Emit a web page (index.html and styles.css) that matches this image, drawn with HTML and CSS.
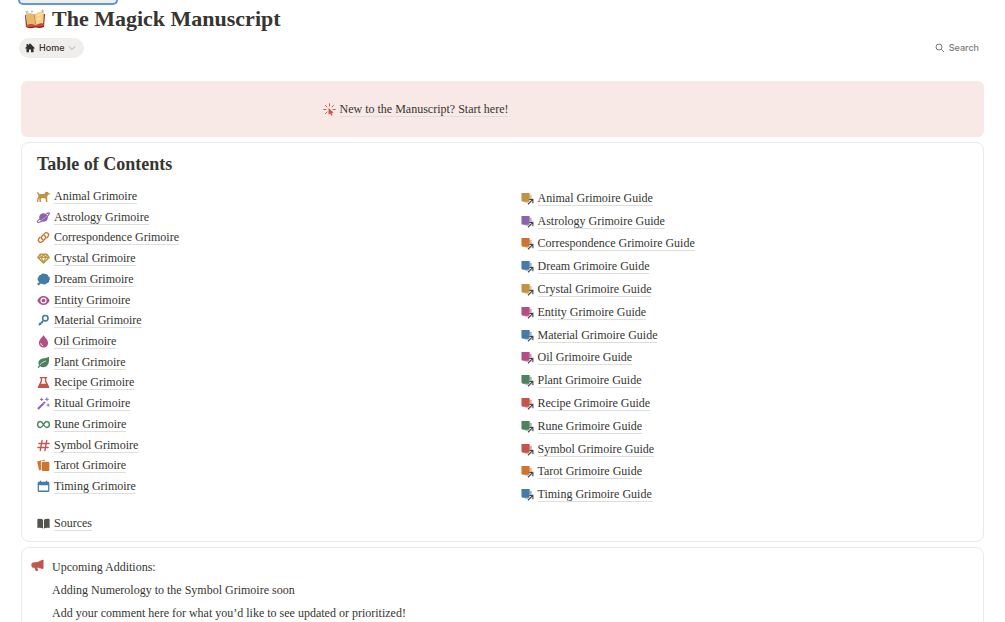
FILE: index.html
```html
<!DOCTYPE html>
<html lang="en">
<head>
<meta charset="utf-8">
<meta name="viewport" content="width=device-width, initial-scale=1">
<title>The Magick Manuscript</title>
<link rel="stylesheet" href="styles.css">
</head>
<body>
<svg class="sprite" aria-hidden="true">
  <symbol id="dog" viewBox="0 0 14 14"><path fill="currentColor" d="M.3 2.400C1 1.900 1.700 2.500 1.800 3.300c.1.800.5 1.100 1.300 1.100h4.700L9.500 1.500l1 .7h1.300l.5 1 1.500.1c0 1.300-.7 1.900-2 1.900l-.9 2.700.3 4.900H9.700L9.200 9.200 5 8.600l-.9 1.500.4 2.700H2.800l-.4-2.700.2-1.400-1 1.600-.3 2.500H-.1l.4-3.400 1.100-2.500V5.500C.4 4.800 0 3.300.3 2.400z"/></symbol>
  <symbol id="planet" viewBox="0 0 14 14"><circle cx="7" cy="7" r="4.700" fill="currentColor"/><path d="M3 8.500C.8 10.300 0 11.500.5 12c.9.800 4.500-.9 7.600-3.400s5.800-5.600 5-6.400c-.4-.5-1.600-.1-3 .6" fill="none" stroke="currentColor" stroke-width="1.300"/><path d="M3 10.700c3.200-1.400 6.200-3.500 8.200-6" fill="none" stroke="#fff" stroke-width=".4"/></symbol>
  <symbol id="link" viewBox="0 0 14 14"><g fill="none" stroke="currentColor" stroke-width="1.500" stroke-linecap="round"><path d="M6 9C4.300 7.800 4.300 6.500 5.500 5.300l2.700-2.700c2.400-2.200 5.700.8 3.600 3.300l-1.200 1.300"/><path d="M8 5c1.700 1.200 1.700 2.500.5 3.700l-2.700 2.700c-2.400 2.200-5.700-.8-3.600-3.300l1.200-1.300"/></g></symbol>
  <symbol id="gem" viewBox="0 0 14 14"><path fill="none" stroke="currentColor" stroke-width="1.600" stroke-linejoin="round" d="M3.500 2.500h7L13 5.800 7 11.800 1 5.800z"/><path d="M1.500 5.800h11M4.500 5.800 7 11l2.500-5.200L7 3zM3.800 3l.7 2.800M10.200 3l-.7 2.800" fill="none" stroke="currentColor" stroke-width="1.200"/></symbol>
  <symbol id="cloud" viewBox="0 0 14 14"><path fill="currentColor" d="M4.300 1.800C5.300.2 7.500 0 8.700 1.200c1.800-.2 3.200.8 3.400 2.400 1.900.9 2.300 3 1 4.500.2 2-1.200 3.300-3 3.100-1.300 1.500-3.500 1.500-4.600.3-2.200.5-3.800-.7-3.800-2.700C.2 7.500.2 5.300 1.700 4.300c0-1.500 1.200-2.500 2.600-2.500z"/><circle cx="1.800" cy="11.900" r="1.400" fill="currentColor"/></symbol>
  <symbol id="eye" viewBox="0 0 14 14"><path fill="currentColor" fill-rule="evenodd" d="M7 2.200c3 0 5.500 2 6.700 4.800C12.500 9.800 10 11.800 7 11.800S1.500 9.800.3 7C1.500 4.200 4 2.200 7 2.200zM7 3.700a3.300 3.300 0 1 0 0 6.600 3.300 3.300 0 0 0 0-6.600z"/><circle cx="7" cy="7" r="2" fill="currentColor"/></symbol>
  <symbol id="key" viewBox="0 0 14 14"><circle cx="9" cy="4.500" r="2.900" fill="none" stroke="currentColor" stroke-width="1.700"/><path d="M7 6.700 2 12.200M2.300 9.600l2.200 2M4.500 8l1.800 1.700" fill="none" stroke="currentColor" stroke-width="1.500"/></symbol>
  <symbol id="drop" viewBox="0 0 14 14"><path fill="currentColor" d="M7 .4C9.200 3.100 12 6 12 8.700a5 4.700 0 0 1-10 0C2 6 4.800 3.100 7 .4z"/><path d="M4 8.700c0 1.600 1 2.600 2.500 2.800" fill="none" stroke="#fff" stroke-width=".9"/></symbol>
  <symbol id="leaf" viewBox="0 0 14 14"><path fill="currentColor" d="M12.800.8c.8 6-.6 11.200-6 11.200-1.400 0-2.500-.4-3.400-1l-1.800 2.300-.9-.7 1.500-2.700C.5 6.800 2.300 3.500 5.800 2.700c2.500-.6 4.900-.2 7-1.900z"/><path d="M3 9.600c2.300-2.600 4.200-3.500 6.600-4.200" stroke="#fff" fill="none" stroke-width=".8"/></symbol>
  <symbol id="flask" viewBox="0 0 14 14"><path fill="currentColor" fill-rule="evenodd" d="M3 1h8v1.500h-1v3l3 5.700c.5 1-.1 1.800-1.100 1.800H2.100c-1 0-1.600-.8-1.100-1.800l3-5.700v-3H3zM5.500 2.500V6L4.300 8.300h5.400L8.500 6V2.500z"/></symbol>
  <symbol id="wand" viewBox="0 0 14 14"><path d="m1 13 7.600-7.600" stroke="currentColor" stroke-width="2.200"/><path d="M5 1v3.400M3.300 2.700h3.400M10.700.5v4M8.700 2.500h4M12 7v3.400M10.300 8.700h3.400" stroke="currentColor" stroke-width="1"/><path d="m6.300 6 1.700 1.700" stroke="#fff" stroke-width=".6"/></symbol>
  <symbol id="infinity" viewBox="0 0 14 14"><path d="M7 7C5.700 4.700 4.800 3.700 3.700 3.700a3 3.300 0 0 0 0 6.600C4.800 10.300 5.700 9.300 7 7s2.200-3.300 3.300-3.300a3 3.300 0 0 1 0 6.600C9.200 10.300 8.300 9.300 7 7z" fill="none" stroke="currentColor" stroke-width="1.500"/></symbol>
  <symbol id="hash" viewBox="0 0 14 14"><path d="M5.500 1.500 3.500 12.500M10.500 1.500 8.500 12.500M2 4.800h11M1 9.200h11" stroke="currentColor" stroke-width="1.500" stroke-linecap="round"/></symbol>
  <symbol id="cards" viewBox="0 0 14 14"><path fill="currentColor" d="M.8 2.300 7.800.8c.7-.1 1 .3 1.100 1.200H6.200C4.800 2 4.200 2.700 4.200 4v7.800l-1.200.3c-.6 0-.9-.3-1-.9L.3 3.300c-.1-.6.1-.9.5-1z"/><rect x="5" y="3" width="8.300" height="10" rx="1.200" fill="currentColor"/></symbol>
  <symbol id="calendar" viewBox="0 0 14 14"><path fill="currentColor" fill-rule="evenodd" d="M3 .8h1.500V2h5V.8H11V2h.7c1 0 1.600.6 1.600 1.600v7.600c0 1-.6 1.600-1.600 1.600H2.300c-1 0-1.600-.6-1.600-1.600V3.600c0-1 .6-1.600 1.600-1.600H3zM2 5.600v5.800h10V5.600z"/></symbol>
  <symbol id="book" viewBox="0 0 14 14"><path fill="currentColor" d="M.4 2.500C2.500 1.700 5 1.800 6.500 3v9.400c-1.800-.9-4-1-6.100-.4zM13.600 2.500C11.500 1.700 9 1.800 7.500 3v9.400c1.800-.9 4-1 6.100-.4z"/></symbol>
  <symbol id="guide" viewBox="0 0 14 14"><path fill="currentColor" opacity=".55" d="M9 3h2.500v8.500H5L3 10h6z"/><path fill="currentColor" d="M.5 1h8.800v9.500H3C1.200 10.500.5 9.600.5 8.500z"/><path d="m7.500 13.200 5-5M8.800 8h4v4" fill="none" stroke="#fff" stroke-width="2.200"/><path d="m7.500 13.200 5-5M8.800 8h4v4" fill="none" stroke="#444" stroke-width="1.200"/></symbol>
  <symbol id="click" viewBox="0 0 14 14"><path d="M7 .8v2.400M2.600 2.600l1.700 1.700M.8 7h2.400M2.600 11.400l1.700-1.700M11.400 2.600 9.700 4.300M10.800 7h2.400" stroke="currentColor" stroke-width="1" stroke-linecap="round"/><path fill="currentColor" d="m6 5.500 5.500 5-2.200.3 1 2.200-1.400.6-1-2.200L6 12.700z"/></symbol>
  <symbol id="megaphone" viewBox="0 0 14 14"><path fill="currentColor" d="M12.300.8 13.500 1v9.500l-1.200.2L8 9.300H6.600l1.200 3.200-2.500.6L3.800 9.400H2.200C.9 9.200.4 8 .4 6.500s.7-2.600 2-2.700l4.800-.5z"/></symbol>
  <symbol id="home" viewBox="0 0 14 14"><path fill="currentColor" d="M7 .5 13.700 7l-.8.900-.9-.7v5.800H8.400V9H5.600v4H2V7.200l-.9.700L.3 7l1.900-1.900V1.500h1.900v1.600z"/></symbol>
</svg>

<main class="page">
  <div class="tab-edge"></div>
  <header>
    <h1>
      <svg class="tome" viewBox="0 0 22 20" aria-hidden="true">
        <path fill="#8d2229" d="M1 6 2 18c3 1.500 6 1.500 8.500.5h1.500c3 .8 5.500.3 8-.5L21 5z"/>
        <path fill="#d64b36" d="m2 16 .2 1.500c3 1 5.500.5 8.300-.2h1.200c3 .6 5.500.2 8-.5L20 15z"/>
        <path fill="#e5b86c" d="M1.500 5C5 3.800 8 4.200 10.500 6l1.200 10.500C9 14.800 6 14.800 3 16z"/>
        <path fill="#f3d08a" d="M10.500 6c2-2.500 5.500-4 9.500-3.500l-.7 12c-3-.2-5.500.2-7.600 2z"/>
        <path d="M13.500 7c1.500-1.500 2.500-1.800 4-1.800M13.700 10.500c1.500-1.200 2.400-1.500 3.700-1.500" fill="none" stroke="#fae8bd" stroke-width="1.200"/>
        <path d="M10.600 6.500 11.600 16" stroke="#c08a45" stroke-width=".6"/>
        <path fill="#a9adb2" d="m3 .8.6 1.600 1.600.6-1.600.6L3 5.200l-.6-1.600L.8 3l1.600-.6zM18.500 0l.5 1.500 1.500.5-1.500.5-.5 1.500-.5-1.500-1.500-.5 1.500-.5zM8 1l.4 1.100 1.100.4-1.100.4L8 4l-.4-1.100-1.100-.4 1.100-.4z"/>
      </svg>
      The Magick Manuscript
    </h1>
    <nav class="toolbar">
      <button class="home" type="button"><svg class="icon-small"><use href="#home"/></svg>Home<svg class="chevron" viewBox="0 0 8 8"><path d="m1 2.500 3 3 3-3" fill="none" stroke="#aaa8a4"/></svg></button>
      <button class="search" type="button"><svg class="icon-small" viewBox="0 0 10 10"><path d="M7 4a3 3 0 1 1-6 0 3 3 0 0 1 6 0zM6.200 6.200 9 9" fill="none" stroke="currentColor"/></svg>Search</button>
    </nav>
  </header>

  <section class="banner"><a class="entry red" href="#"><svg class="icon"><use href="#click"/></svg><span>New to the Manuscript? Start here!</span></a></section>

  <section class="card contents">
    <div>
      <h2>Table of Contents</h2>
      <ul class="list grimoires">
        <li><a class="entry gold" href="#"><svg class="icon"><use href="#dog"/></svg><span>Animal Grimoire</span></a></li>
        <li><a class="entry purple" href="#"><svg class="icon"><use href="#planet"/></svg><span>Astrology Grimoire</span></a></li>
        <li><a class="entry orange" href="#"><svg class="icon"><use href="#link"/></svg><span>Correspondence Grimoire</span></a></li>
        <li><a class="entry gold" href="#"><svg class="icon"><use href="#gem"/></svg><span>Crystal Grimoire</span></a></li>
        <li><a class="entry blue" href="#"><svg class="icon"><use href="#cloud"/></svg><span>Dream Grimoire</span></a></li>
        <li><a class="entry pink" href="#"><svg class="icon"><use href="#eye"/></svg><span>Entity Grimoire</span></a></li>
        <li><a class="entry blue" href="#"><svg class="icon"><use href="#key"/></svg><span>Material Grimoire</span></a></li>
        <li><a class="entry pink" href="#"><svg class="icon"><use href="#drop"/></svg><span>Oil Grimoire</span></a></li>
        <li><a class="entry green" href="#"><svg class="icon"><use href="#leaf"/></svg><span>Plant Grimoire</span></a></li>
        <li><a class="entry red" href="#"><svg class="icon"><use href="#flask"/></svg><span>Recipe Grimoire</span></a></li>
        <li><a class="entry purple" href="#"><svg class="icon"><use href="#wand"/></svg><span>Ritual Grimoire</span></a></li>
        <li><a class="entry green" href="#"><svg class="icon"><use href="#infinity"/></svg><span>Rune Grimoire</span></a></li>
        <li><a class="entry red" href="#"><svg class="icon"><use href="#hash"/></svg><span>Symbol Grimoire</span></a></li>
        <li><a class="entry orange" href="#"><svg class="icon"><use href="#cards"/></svg><span>Tarot Grimoire</span></a></li>
        <li><a class="entry blue" href="#"><svg class="icon"><use href="#calendar"/></svg><span>Timing Grimoire</span></a></li>
      </ul>
      <a class="entry sources" href="#"><svg class="icon"><use href="#book"/></svg><span>Sources</span></a>
    </div>
    <ul class="list guides">
      <li><a class="entry gold" href="#"><svg class="icon"><use href="#guide"/></svg><span>Animal Grimoire Guide</span></a></li>
      <li><a class="entry purple" href="#"><svg class="icon"><use href="#guide"/></svg><span>Astrology Grimoire Guide</span></a></li>
      <li><a class="entry orange" href="#"><svg class="icon"><use href="#guide"/></svg><span>Correspondence Grimoire Guide</span></a></li>
      <li><a class="entry blue" href="#"><svg class="icon"><use href="#guide"/></svg><span>Dream Grimoire Guide</span></a></li>
      <li><a class="entry gold" href="#"><svg class="icon"><use href="#guide"/></svg><span>Crystal Grimoire Guide</span></a></li>
      <li><a class="entry pink" href="#"><svg class="icon"><use href="#guide"/></svg><span>Entity Grimoire Guide</span></a></li>
      <li><a class="entry blue" href="#"><svg class="icon"><use href="#guide"/></svg><span>Material Grimoire Guide</span></a></li>
      <li><a class="entry pink" href="#"><svg class="icon"><use href="#guide"/></svg><span>Oil Grimoire Guide</span></a></li>
      <li><a class="entry green" href="#"><svg class="icon"><use href="#guide"/></svg><span>Plant Grimoire Guide</span></a></li>
      <li><a class="entry red" href="#"><svg class="icon"><use href="#guide"/></svg><span>Recipe Grimoire Guide</span></a></li>
      <li><a class="entry green" href="#"><svg class="icon"><use href="#guide"/></svg><span>Rune Grimoire Guide</span></a></li>
      <li><a class="entry red" href="#"><svg class="icon"><use href="#guide"/></svg><span>Symbol Grimoire Guide</span></a></li>
      <li><a class="entry orange" href="#"><svg class="icon"><use href="#guide"/></svg><span>Tarot Grimoire Guide</span></a></li>
      <li><a class="entry blue" href="#"><svg class="icon"><use href="#guide"/></svg><span>Timing Grimoire Guide</span></a></li>
    </ul>
  </section>

  <section class="card updates">
    <svg class="icon red"><use href="#megaphone"/></svg>
    <div>
      <p>Upcoming Additions:</p>
      <p>Adding Numerology to the Symbol Grimoire soon</p>
      <p>Add your comment here for what you’d like to see updated or prioritized!</p>
    </div>
  </section>
</main>
</body>
</html>
```

FILE: styles.css
```css
* { box-sizing: border-box; }
body {
  margin: 0;
  background: #fff;
  color: #373530;
  font: 12px/20px "Liberation Serif", "Times New Roman", serif;
}
h1, h2, p, ul { margin: 0; padding: 0; }
ul { list-style: none; }
button { border: 0; padding: 0; background: none; font: 500 9px/20px Inter, "Liberation Sans", sans-serif; }
.sprite { position: absolute; width: 0; height: 0; }

.page { padding: 0 21px; }
.tab-edge {
  width: 100px;
  height: 5px;
  margin-left: -3px;
  border: 2px solid #6493e0;
  border-top: 0;
  border-radius: 0 0 5px 5px;
  background: #efefed;
}
h1 {
  display: flex;
  align-items: center;
  gap: 6px;
  padding-left: 3px;
  font-size: 22px;
  line-height: 28px;
}
.tome { width: 22px; height: 20px; }
.toolbar {
  display: flex;
  align-items: center;
  justify-content: space-between;
  margin: 5px 5px 23px -2px;
}
.home, .search { display: flex; align-items: center; gap: 4px; }
.home { padding: 0 8px 0 6px; border-radius: 10px; background: #efeeec; color: #32302c; }
.search { color: #7d7a75; }
.icon-small { width: 10px; height: 10px; }
.chevron { width: 8px; height: 8px; }

.banner {
  padding: 18px 0 18px 31%;
  border-left: 3px solid #f8e9e6;
  border-radius: 6px;
  background: #f8e9e6;
}
.card { margin-top: 5px; border: 1px solid #e9e9e7; border-radius: 8px; }
.contents {
  display: grid;
  grid-template-columns: 1fr 1fr;
  gap: 36px;
  padding: 10px 15px 8px;
}
h2 { font-size: 18px; line-height: 22px; }
.list { display: grid; grid-auto-rows: 1fr; }
.grimoires { min-height: 311px; margin-top: 11px; }
.guides { min-height: 319px; align-self: start; margin-top: 34px; }
.list li, .entry { display: flex; align-items: center; }
.sources { margin-top: 16px; color: #55534e; }

.entry { gap: 4px; min-height: 20px; text-decoration: none; }
.entry span { border-bottom: 1px solid #dededc; color: #373530; line-height: 14px; }
.icon { flex: none; width: 13px; height: 13px; }
.gold { color: #c29343; }
.purple { color: #8b64ac; }
.orange { color: #cc772f; }
.blue { color: #447ba7; }
.pink { color: #b44f86; }
.green { color: #4f8062; }
.red { color: #c4554d; }

.updates { display: flex; gap: 8px; padding: 9px; }
.updates .icon { margin-top: 2px; }
.updates p { margin-bottom: 3px; }
```
